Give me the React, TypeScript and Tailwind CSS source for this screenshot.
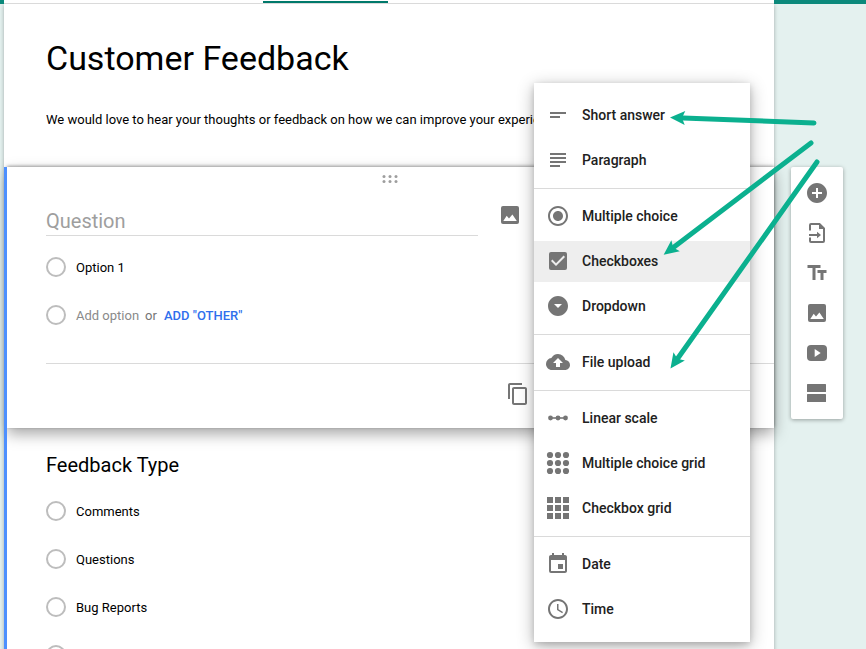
import React from "react";
import {
  MdAccessTime,
  MdAddCircle,
  MdArrowDropDownCircle,
  MdCheckBox,
  MdCloudUpload,
  MdContentCopy,
  MdEvent,
  MdRadioButtonChecked,
  MdShortText,
  MdSubject,
  MdTextFields,
} from "react-icons/md";

const GRID = [4, 12, 20];

function Glyph({ children }: { children: React.ReactNode }) {
  return (
    <svg viewBox="0 0 24 24" className="size-6" fill="currentColor" aria-hidden="true">
      {children}
    </svg>
  );
}

const ImageIcon = () => (
  <Glyph>
    <rect x="3" y="3" width="18" height="18" rx="2" />
    <path d="M5.3 18 8.7 12.7 11 15.4 14.4 11.6 18.8 18z" fill="#fff" />
  </Glyph>
);

const LinearScaleIcon = () => (
  <Glyph>
    <path d="M4 11.2h16v1.6H4z" />
    <circle cx="4.5" cy="12" r="2.4" />
    <circle cx="12" cy="12" r="2.4" />
    <circle cx="19.5" cy="12" r="2.4" />
  </Glyph>
);

const DotGridIcon = () => (
  <Glyph>
    {GRID.map((y) => GRID.map((x) => <circle key={`${x}-${y}`} cx={x} cy={y} r="3.1" />))}
  </Glyph>
);

const SquareGridIcon = () => (
  <Glyph>
    {GRID.map((y) =>
      GRID.map((x) => <rect key={`${x}-${y}`} x={x - 3} y={y - 3} width="6" height="6" />),
    )}
  </Glyph>
);

const ImportIcon = () => (
  <Glyph>
    <path
      d="M5 9.5V4a1 1 0 0 1 1-1h8.5L19 7.5V20a1 1 0 0 1-1 1H6a1 1 0 0 1-1-1v-3.5"
      fill="none"
      stroke="currentColor"
      strokeWidth="2"
    />
    <path d="M14 2.5V8h5.5z" />
    <path d="M4 13h8v-2.2l4 3.200-4 3.200V15H4z" />
  </Glyph>
);

const VideoIcon = () => (
  <Glyph>
    <rect x="2" y="4" width="20" height="16" rx="4" />
    <path d="M9.7 8v8l6-4z" fill="#fff" />
  </Glyph>
);

const SectionIcon = () => (
  <Glyph>
    <rect x="2" y="3" width="19" height="8" rx="0.5" />
    <rect x="2" y="13" width="19" height="8" rx="0.5" />
  </Glyph>
);

const menuGroups = [
  [
    { label: "Short answer", icon: <MdShortText /> },
    { label: "Paragraph", icon: <MdSubject /> },
  ],
  [
    { label: "Multiple choice", icon: <MdRadioButtonChecked /> },
    { label: "Checkboxes", icon: <MdCheckBox />, active: true },
    { label: "Dropdown", icon: <MdArrowDropDownCircle /> },
  ],
  [{ label: "File upload", icon: <MdCloudUpload /> }],
  [
    { label: "Linear scale", icon: <LinearScaleIcon /> },
    { label: "Multiple choice grid", icon: <DotGridIcon /> },
    { label: "Checkbox grid", icon: <SquareGridIcon /> },
  ],
  [
    { label: "Date", icon: <MdEvent /> },
    { label: "Time", icon: <MdAccessTime /> },
  ],
];

const tools = [
  { label: "Add question", icon: <MdAddCircle /> },
  { label: "Import questions", icon: <ImportIcon /> },
  { label: "Add title and description", icon: <MdTextFields /> },
  { label: "Add image", icon: <ImageIcon /> },
  { label: "Add video", icon: <VideoIcon /> },
  { label: "Add section", icon: <SectionIcon /> },
];

const radioClass =
  "size-5 shrink-0 appearance-none rounded-full border-2 border-[#bdbdbd] bg-white";

function TypeMenu() {
  return (
    <div
      role="menu"
      aria-label="Question type"
      className="absolute -top-[84px] right-6 z-10 w-[216px] divide-y divide-[#dadada] bg-white py-[5px] text-[#212121] shadow-[0_4px_16px_rgba(0,0,0,0.3),0_2px_6px_rgba(0,0,0,0.15)]"
    >
      {menuGroups.map((group) => (
        <div key={group[0].label} role="group" className="flex flex-col gap-1 py-[7px]">
          {group.map((item) => (
            <button
              key={item.label}
              type="button"
              role="menuitem"
              className={
                item.active
                  ? "flex h-[41px] items-center gap-3 bg-[#eeeeee] px-3 pb-0.5 text-sm font-medium"
                  : "flex h-[41px] items-center gap-3 px-3 pb-0.5 text-sm font-medium"
              }
            >
              <span className="text-2xl text-[#757575]">{item.icon}</span>
              {item.label}
            </button>
          ))}
        </div>
      ))}
    </div>
  );
}

function Arrows() {
  return (
    <svg
      viewBox="0 0 170 270"
      className="pointer-events-none absolute top-[110px] right-[36px] z-20 h-[270px] w-[170px]"
      fill="none"
      stroke="#0bb08f"
      strokeWidth="5"
      strokeLinecap="round"
      aria-hidden="true"
    >
      <defs>
        <marker
          id="head"
          markerUnits="userSpaceOnUse"
          markerWidth="18"
          markerHeight="18"
          refX="3"
          refY="9"
          orient="auto"
          viewBox="0 0 18 18"
        >
          <path d="M16 9 1 16 4 9 1 2z" fill="#0bb08f" stroke="none" />
        </marker>
      </defs>
      <path d="M154 13 23 8" markerEnd="url(#head)" />
      <path d="M151 33 14 137" markerEnd="url(#head)" />
      <path d="M157 52 18 248" markerEnd="url(#head)" />
    </svg>
  );
}

export default function App() {
  return (
    <div className="relative flex h-screen flex-col overflow-hidden bg-[#e4f1ef] font-['Roboto',sans-serif] text-black">
      <header className="relative z-10 flex h-1 shrink-0 bg-[#0b897b] pr-[92px] pl-1">
        <div className="flex flex-1 items-end border-b border-[#dadada] bg-white pl-[259px]">
          <div className="h-[2px] w-[125px] bg-[#00796b]" />
        </div>
      </header>

      <div className="flex min-h-0 flex-1 items-start gap-[17px] pr-[23px] pl-1">
        <main className="min-w-0 flex-1 bg-white shadow-[0_1px_4px_rgba(0,0,0,0.3)]">
          <section className="px-[42px] pt-[34px] pb-[37px]">
            <h1 className="text-[34px] leading-10">Customer Feedback</h1>
            <p className="mt-8 text-[13px] leading-5">
              We would love to hear your thoughts or feedback on how we can improve your experience!
            </p>
          </section>

          <div className="flex">
            <div className="relative z-10 w-[3px] shrink-0 bg-[#4d90fe]" />
            <div className="min-w-0 flex-1">
              <section className="relative pt-2 pb-1 pl-[39px] shadow-[0_-1px_3px_rgba(0,0,0,0.35),0_6px_14px_rgba(0,0,0,0.35)]">
                <svg
                  viewBox="0 0 16 8"
                  className="mx-auto h-2 w-4 -translate-x-5"
                  fill="#9e9e9e"
                  aria-hidden="true"
                >
                  {[2, 8, 14].map((x) => (
                    <React.Fragment key={x}>
                      <circle cx={x} cy="1.5" r="1.5" />
                      <circle cx={x} cy="6.5" r="1.5" />
                    </React.Fragment>
                  ))}
                </svg>

                <div className="mt-5 flex h-[33px] items-start gap-5">
                  <input
                    type="text"
                    aria-label="Question"
                    placeholder="Question"
                    className="h-[30px] w-[432px] self-end border-b border-[#dadada] text-xl outline-none placeholder:text-[#9e9e9e]"
                  />
                  <button type="button" aria-label="Add image" className="text-[#757575]">
                    <ImageIcon />
                  </button>
                </div>

                <div className="mt-[7px] text-[13px]">
                  <label className="flex h-12 items-center gap-[10px]">
                    <input type="radio" name="question" className={radioClass} />
                    <span className="pt-0.5">Option 1</span>
                  </label>
                  <div className="flex h-12 items-center">
                    <input
                      type="radio"
                      name="question"
                      aria-label="New option"
                      className={radioClass}
                    />
                    <button type="button" className="ml-[10px] pt-0.5 text-[#8a8a8a]">
                      Add option
                    </button>
                    <span className="ml-1.5 pt-0.5 text-[#757575]">or</span>
                    <button type="button" className="ml-[7px] pt-0.5 font-medium text-[#2f6fed]">
                      ADD "OTHER"
                    </button>
                  </div>
                </div>

                <div className="mt-6 flex h-[61px] items-center justify-end border-t border-[#dadada] pr-[244px]">
                  <button type="button" aria-label="Duplicate" className="text-2xl text-[#757575]">
                    <MdContentCopy />
                  </button>
                </div>

                <TypeMenu />
              </section>

              <section className="px-[39px] pt-[23px] pb-10">
                <h2 className="text-xl leading-7">Feedback Type</h2>
                <div className="mt-2 text-[13px]">
                  {["Comments", "Questions", "Bug Reports"].map((option) => (
                    <label key={option} className="flex h-12 items-center gap-[10px]">
                      <input type="radio" name="feedback" className={radioClass} />
                      <span className="pt-0.5">{option}</span>
                    </label>
                  ))}
                  <div className="flex h-12 items-center">
                    <input
                      type="radio"
                      name="feedback"
                      aria-label="Fourth option"
                      className={radioClass}
                    />
                  </div>
                </div>
              </section>
            </div>
          </div>
        </main>

        <aside className="mt-[163px] flex w-[52px] shrink-0 flex-col rounded-[2px] bg-white py-1.5 shadow-[0_1px_4px_rgba(0,0,0,0.35)]">
          {tools.map((tool) => (
            <button
              key={tool.label}
              type="button"
              aria-label={tool.label}
              className="flex h-10 items-center justify-center text-2xl text-[#757575]"
            >
              {tool.icon}
            </button>
          ))}
        </aside>
      </div>

      <Arrows />
    </div>
  );
}
